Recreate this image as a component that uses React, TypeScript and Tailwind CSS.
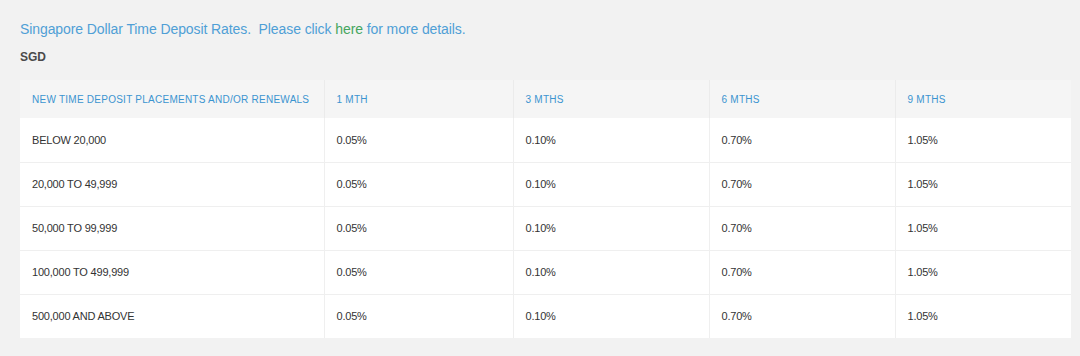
import React from "react";

const rows = [
  "BELOW 20,000",
  "20,000 TO 49,999",
  "50,000 TO 99,999",
  "100,000 TO 499,999",
  "500,000 AND ABOVE",
];
const rates = ["0.05%", "0.10%", "0.70%", "1.05%"];

export default function App() {
  return (
    <div
      className="w-[1080px] h-[356px] bg-[#f2f2f2] pl-5 pt-[20px] overflow-hidden"
      style={{ fontFamily: '"Liberation Sans", Arial, sans-serif' }}
    >
      <p className="text-[14px] leading-[18px] tracking-[-0.09px] text-[#4f9fd6]">
        Singapore Dollar Time Deposit Rates.&nbsp; Please click{" "}
        <span className="text-[#45a65e]">here</span> for more details.
      </p>
      <p className="mt-[12px] text-[12px] leading-[14px] font-bold text-[#4a4a4a]">SGD</p>
      <table className="mt-[16px] w-[1051px] border-collapse bg-white text-left">
        <thead>
          <tr className="bg-[#f5f5f5] h-[38px]">
            <th className="w-[304px] px-3 font-normal text-[10px] tracking-[0.25px] text-[#3b94d0] border-r border-[#ebebeb]">
              NEW TIME DEPOSIT PLACEMENTS AND/OR RENEWALS
            </th>
            <th className="w-[189px] px-3 font-normal text-[10px] tracking-[0.25px] text-[#3b94d0] border-r border-[#ebebeb]">
              1 MTH
            </th>
            <th className="w-[196px] px-3 font-normal text-[10px] tracking-[0.25px] text-[#3b94d0] border-r border-[#ebebeb]">
              3 MTHS
            </th>
            <th className="w-[186px] px-3 font-normal text-[10px] tracking-[0.25px] text-[#3b94d0] border-r border-[#ebebeb]">
              6 MTHS
            </th>
            <th className="px-3 font-normal text-[10px] tracking-[0.25px] text-[#3b94d0]">9 MTHS</th>
          </tr>
        </thead>
        <tbody>
          {rows.map((r, i) => (
            <tr key={r} className={`h-[44px] ${i > 0 ? "border-t border-[#efefef]" : ""}`}>
              <td className="px-3 text-[11px] text-[#333] tracking-[-0.2px] border-r border-[#efefef]">{r}</td>
              {rates.map((v, j) => (
                <td
                  key={j}
                  className={`px-3 text-[11px] text-[#333] tracking-[-0.2px] ${j < 3 ? "border-r border-[#efefef]" : ""}`}
                >
                  {v}
                </td>
              ))}
            </tr>
          ))}
        </tbody>
      </table>
    </div>
  );
}
